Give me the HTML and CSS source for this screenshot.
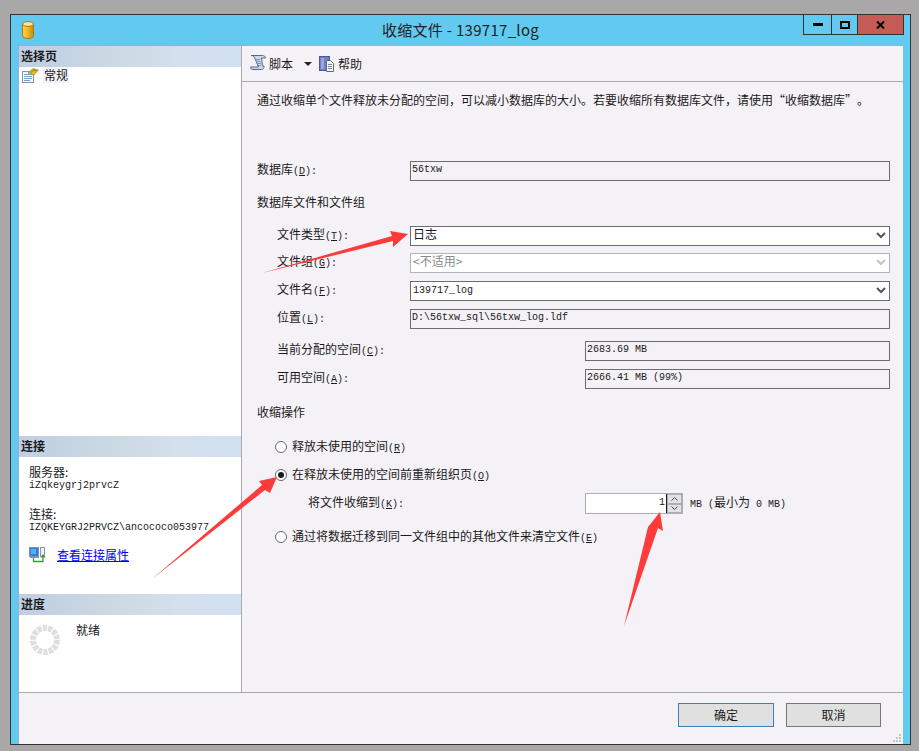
FILE: index.html
```html
<!DOCTYPE html>
<html lang="zh-CN">
<head>
<meta charset="utf-8">
<title>收缩文件 - 139717_log</title>
<link rel="stylesheet" href="styles.css">
</head>
<body>
<div class="window">
  <header class="titlebar">
    <div class="title-left">
      <svg width="14" height="18" viewBox="0 0 14 18"><defs><linearGradient id="cyl" x1="0" x2="1" y1="0" y2="0"><stop offset="0" stop-color="#f6d35e"/><stop offset=".45" stop-color="#f2b91f"/><stop offset="1" stop-color="#c98a0b"/></linearGradient></defs><path d="M1.500 3v12c0 1.400 2.500 2.500 5.500 2.500s5.500-1.100 5.500-2.500V3z" fill="url(#cyl)" stroke="#a87a18"/><ellipse cx="7" cy="3" rx="5.500" ry="2.300" fill="#fbe9a6" stroke="#a87a18"/></svg>
    </div>
    <div class="title-text">收缩文件 - 139717_log</div>
    <div class="title-right">
      <div class="wbtn wbtn-min"><svg width="10" height="3" viewBox="0 0 10 3"><rect width="10" height="3" fill="#000"/></svg></div>
      <div class="wbtn wbtn-max"><svg width="10" height="8" viewBox="0 0 10 8"><path d="M1 1h8v6H1z" fill="none" stroke="#000" stroke-width="2"/></svg></div>
      <div class="wbtn wbtn-close"><svg width="9" height="8" viewBox="0 0 9 8"><path d="M1 0.500L8 7.500M8 0.500L1 7.500" stroke="#000" stroke-width="2"/></svg></div>
    </div>
  </header>

  <div class="main">
    <div class="upper">
      <aside class="side">
        <div class="side-head">选择页</div>
        <div class="page-item">
          <svg width="17" height="15" viewBox="0 0 17 15"><rect x="0.500" y="3.500" width="11" height="11" fill="#f4f7fb" stroke="#8794a8"/><path d="M2 6.500h8M2 8.500h8M2 10.500h8M2 12.500h6" stroke="#7f9cc6"/><path d="M6 5L11 0.500L16.500 2L12 7z" fill="#e8bc2e" stroke="#8b7a22" stroke-width=".6"/><path d="M8.500 5l3-3 3 .7" stroke="#4f8a3a" fill="none"/></svg>
          <span class="page-name">常规</span>
        </div>
        <div class="side-fill"></div>
        <div class="side-head">连接</div>
        <div class="conn">
          <div class="conn-label">服务器:</div>
          <div class="mono conn-value">iZqkeygrj2prvcZ</div>
          <div class="conn-label conn-second">连接:</div>
          <div class="mono conn-value">IZQKEYGRJ2PRVCZ\ancococo053977</div>
          <div class="conn-link">
            <svg width="17" height="16" viewBox="0 0 17 16"><rect x="0.500" y="0.500" width="9" height="9" fill="#2f7fe0" stroke="#7f93ad"/><rect x="2" y="2" width="5" height="5" fill="#58b0f0"/><rect x="1" y="10" width="9" height="1" fill="#8c98a8"/><rect x="11.500" y="0.500" width="4" height="9" fill="#eef1f5" stroke="#8b95a5"/><path d="M4.500 11v3.500h9.500V9" fill="none" stroke="#3d9a26" stroke-width="1.300"/><path d="M11.500 10.500L14 7l2.500 3.500z" fill="#3d9a26"/></svg>
            <a href="#">查看连接属性</a>
          </div>
        </div>
        <div class="side-head">进度</div>
        <div class="progress">
          <svg width="32" height="32" viewBox="0 0 32 32"><circle cx="16" cy="16" r="12" fill="none" stroke="#dfdfdf" stroke-width="6" stroke-dasharray="4.300 1.090"/></svg>
          <span>就绪</span>
        </div>
      </aside>

      <section class="content">
        <div class="toolbar">
          <svg class="tool-icon" width="16" height="17" viewBox="0 0 16 17"><path d="M1 .500h11.500c1.500 0 3 1 3 2.500h-4l1 8h1.500c.5 2-1 3.500-2.500 3.500H3c-1.500 0-2.500-1-2.500-2.500h8L5 3.500C4.500 1.500 3 .5 1 .5z" fill="#ccd9ec" stroke="#55688f"/><path d="M5.500 4.500h4.500M6 6.500h4.500M6.500 8.500h4.500M7 10.500h4" stroke="#7c8fb3"/></svg>
          <span class="tool-text">脚本</span>
          <svg class="tool-caret" width="8" height="4" viewBox="0 0 8 4"><path d="M0 0h8L4 4z" fill="#222"/></svg>
          <svg class="tool-icon tool-help" width="16" height="16" viewBox="0 0 16 16"><rect x=".500" y=".500" width="10" height="14" fill="#6e7fc4" stroke="#4a5a96"/><rect x="2" y="2" width="3" height="11" fill="#98a6dc"/><path d="M7.500 4.500h4l3 3v8h-7z" fill="#f5f7fb" stroke="#5b6a80"/><path d="M9 8.500h4M9 10.500h4M9 12.500h4" stroke="#7a8aa0"/></svg>
          <span class="tool-text">帮助</span>
        </div>

        <div class="form">
          <p class="desc">通过收缩单个文件释放未分配的空间&#xFF0C;可以减小数据库的大小。若要收缩所有数据库文件&#xFF0C;请使用<span class="quote-open">&#x201C;</span>收缩数据库<span class="quote-close">&#x201D;</span>。</p>

          <div class="row gap-db">
            <label>数据库<span class="mono">(<u>D</u>):</span></label>
            <div class="box mono">56txw</div>
          </div>

          <h2 class="group gap-13">数据库文件和文件组</h2>

          <div class="row sub gap-12">
            <label>文件类型<span class="mono">(<u>T</u>):</span></label>
            <div class="combo"><span class="combo-cjk">日志</span><svg width="10" height="7" viewBox="0 0 10 7"><path d="M1 1l4 4 4-4" fill="none" stroke="#555" stroke-width="2"/></svg></div>
          </div>
          <div class="row sub gap-7">
            <label>文件组<span class="mono">(<u>G</u>):</span></label>
            <div class="combo combo-off"><span class="combo-cjk">&lt;不适用&gt;</span><svg width="10" height="7" viewBox="0 0 10 7"><path d="M1 1l4 4 4-4" fill="none" stroke="#c4c4c4" stroke-width="2"/></svg></div>
          </div>
          <div class="row sub gap-8">
            <label>文件名<span class="mono">(<u>F</u>):</span></label>
            <div class="combo"><span class="mono">139717_log</span><svg width="10" height="7" viewBox="0 0 10 7"><path d="M1 1l4 4 4-4" fill="none" stroke="#555" stroke-width="2"/></svg></div>
          </div>
          <div class="row sub gap-8">
            <label>位置<span class="mono">(<u>L</u>):</span></label>
            <div class="box mono">D:\56txw_sql\56txw_log.ldf</div>
          </div>

          <div class="row sub wide gap-12">
            <label>当前分配的空间<span class="mono">(<u>C</u>):</span></label>
            <div class="box mono">2683.69 MB</div>
          </div>
          <div class="row sub wide gap-8">
            <label>可用空间<span class="mono">(<u>A</u>):</span></label>
            <div class="box mono">2666.41 MB (99%)</div>
          </div>

          <h2 class="group gap-15">收缩操作</h2>

          <div class="radio gap-15"><i class="dot"></i><span>释放未使用的空间<span class="mono">(<u>R</u>)</span></span></div>
          <div class="radio gap-8"><i class="dot dot-on"></i><span>在释放未使用的空间前重新组织页<span class="mono">(<u>O</u>)</span></span></div>
          <div class="row shrink gap-7">
            <label>将文件收缩到<span class="mono">(<u>K</u>):</span></label>
            <div class="spin">
              <div class="spin-val mono">1</div>
              <div class="spin-btns">
                <div class="spin-btn"><svg width="7" height="4" viewBox="0 0 7 4"><path d="M.500 3.500l3-3 3 3" fill="none" stroke="#444"/></svg></div>
                <div class="spin-btn"><svg width="7" height="4" viewBox="0 0 7 4"><path d="M.500 .500l3 3 3-3" fill="none" stroke="#444"/></svg></div>
              </div>
            </div>
            <div class="unit"><span class="mono">MB (</span>最小为<span class="mono"> 0 MB)</span></div>
          </div>
          <div class="radio gap-15"><i class="dot"></i><span>通过将数据迁移到同一文件组中的其他文件来清空文件<span class="mono">(<u>E</u>)</span></span></div>
        </div>
      </section>
    </div>

    <footer class="footer">
      <button class="btn btn-default" type="button">确定</button>
      <button class="btn" type="button">取消</button>
      <svg class="grip" width="8" height="8" viewBox="0 0 8 8"><path d="M6 0h2v2H6zM3 3h2v2H3zM6 3h2v2H6zM0 6h2v2H0zM3 6h2v2H3zM6 6h2v2H6z" fill="#c4c4c4"/></svg>
    </footer>
  </div>
</div>

<svg class="arrows" width="919" height="751" viewBox="0 0 919 751">
  <polygon points="262,273 392,236 390,231 408,234 393,247 393,241"/>
  <polygon points="152,579 262,485 259,481 277,477 270,493 265,490"/>
  <polygon points="624,626 648,527 660,512 663,531 658,528"/>
</svg>
</body>
</html>
```

FILE: styles.css
```css
* { box-sizing: border-box; }

html, body {
  margin: 0;
  height: 100%;
}

body {
  position: relative;
  width: 919px;
  height: 751px;
  overflow: hidden;
  padding: 14px 0 0 10px;
  background: #a9a7a8;
  font: 12px/20px "Noto Sans CJK SC", "Liberation Sans", sans-serif;
  color: #1a1a1a;
}

.mono {
  font-family: "Liberation Mono", "Noto Sans CJK SC", monospace;
  font-size: 10px;
}

.window {
  display: flex;
  flex-direction: column;
  width: 901px;
  height: 731px;
  border: 1px solid #333;
  background: #62c9f0;
}

.titlebar {
  display: grid;
  grid-template-columns: 1fr auto 1fr;
  align-items: start;
  height: 30px;
  flex: none;
}

.title-left {
  padding: 6px 0 0 10px;
}

.title-left svg { display: block; }

.title-text {
  font-size: 15px;
  line-height: 30px;
  letter-spacing: .3px;
  color: #222;
}

.title-right {
  display: flex;
  justify-content: flex-end;
  padding-right: 6px;
}

.wbtn {
  display: flex;
  align-items: center;
  justify-content: center;
  height: 21px;
  margin-top: -1px;
  border: 1px solid #333;
  border-left-width: 0;
}

.wbtn-min { width: 29px; border-left-width: 1px; }
.wbtn-max { width: 26px; }
.wbtn-close { width: 46px; background: #c45b54; }

.main {
  flex: 1;
  display: flex;
  flex-direction: column;
  margin: 0 7px;
  min-height: 0;
  border-top: 1px solid #8fb4d0;
  border-left: 1px solid #8fb4d0;
  background: #f5f2f7;
}

.upper {
  flex: none;
  display: flex;
  height: 647px;
  border-bottom: 1px solid #a9a9a9;
}

.side {
  flex: none;
  display: flex;
  flex-direction: column;
  width: 223px;
  border-right: 1px solid #a9a9a9;
  background: #fff;
}

.side-head {
  flex: none;
  height: 21px;
  padding-left: 2px;
  background: linear-gradient(90deg, #bfcee2, #cddbe4 48%, #d5dfee 72%, #d0e1f3);
  font-weight: 700;
  line-height: 20px;
}

.page-item {
  display: flex;
  align-items: center;
  gap: 4px;
  height: 16px;
  padding-left: 3px;
}

.page-name {
  padding: 0 1px;
  background: #f5f2f7;
  line-height: 16px;
}

.side-fill { flex: 1; }

.conn {
  flex: none;
  height: 137px;
  padding: 8px 0 0 10px;
}

.conn-label { line-height: 14px; }
.conn-value { line-height: 10px; margin-top: 2px; }
.conn-second { margin-top: 16px; }

.conn-link {
  display: flex;
  align-items: center;
  gap: 11px;
  margin-top: 12px;
}

.conn-link a { color: #0000ee; }

.progress {
  flex: none;
  display: flex;
  align-items: flex-start;
  gap: 15px;
  height: 77px;
  padding: 9px 0 0 10px;
}

.progress span { margin-top: -4px; }

.content {
  flex: 1;
  min-width: 0;
}

.toolbar {
  display: flex;
  align-items: center;
  height: 36px;
  padding-left: 8px;
  border-bottom: 1px solid #a9a9a9;
}

.tool-icon { flex: none; }
.tool-text { margin-left: 3px; }
.tool-caret { margin-left: 11px; }
.tool-help { margin-left: 7px; }

.form {
  padding: 8px 13px 0 15px;
}

.desc {
  margin: 0;
  white-space: nowrap;
}

.quote-open, .quote-close {
  display: inline-block;
  width: 12px;
}

.quote-open { text-align: right; }
.quote-close { text-align: left; }

.row {
  display: grid;
  grid-template-columns: 153px 1fr;
  align-items: center;
  height: 20px;
}

.row.sub label { padding-left: 20px; }
.row.wide { grid-template-columns: 328px 1fr; }

.row.shrink {
  grid-template-columns: 328px 98px 1fr;
}

.row.shrink label { padding-left: 51px; }

.box, .combo {
  display: flex;
  align-items: center;
  height: 20px;
  padding-left: 1px;
  border: 1px solid #6d6d6d;
}

.box { padding-bottom: 2px; }

.combo {
  justify-content: space-between;
  padding: 0 3px 0 2px;
  background: #fff;
}

.combo-cjk { margin-top: -3px; }

.combo-off {
  border-color: #b1b5b8;
  color: #8a8a8a;
}

.group {
  height: 20px;
  margin: 0;
  font: inherit;
}

.radio {
  display: flex;
  align-items: center;
  gap: 5px;
  height: 20px;
  padding-left: 18px;
}

.dot {
  position: relative;
  flex: none;
  width: 12px;
  height: 12px;
  border: 1px solid #666;
  border-radius: 50%;
  background: #fff;
}

.dot-on::after {
  content: "";
  position: absolute;
  inset: 2px;
  border-radius: 50%;
  background: #1a1a1a;
}

.spin {
  display: flex;
  height: 21px;
  border: 1px solid #adadb8;
  background: #fff;
}

.spin-val {
  flex: 1;
  padding-right: 1px;
  text-align: right;
  line-height: 18px;
}

.spin-btns {
  display: flex;
  flex-direction: column;
  width: 16px;
  border-left: 1px solid #1a1a1a;
}

.spin-btn {
  flex: 1;
  display: flex;
  align-items: center;
  justify-content: center;
  background: #e2e2e4;
  border: 1px solid #adadb8;
}

.unit { padding-left: 7px; white-space: nowrap; }

.gap-db { margin-top: 49px; }
.gap-7 { margin-top: 7px; }
.gap-8 { margin-top: 8px; }
.gap-12 { margin-top: 12px; }
.gap-13 { margin-top: 13px; }
.gap-15 { margin-top: 15px; }

.footer {
  position: relative;
  flex: 1;
  display: flex;
  justify-content: flex-end;
  gap: 12px;
  padding: 10px 22px 0 0;
}

.btn {
  width: 96px;
  height: 24px;
  padding: 0;
  border: 1px solid #777;
  background: #e0e0e0;
  font: inherit;
  color: #1a1a1a;
}

.btn + .btn { width: 95px; }

.btn-default { border-color: #3a7fb8; }

.grip {
  position: absolute;
  right: 2px;
  bottom: 2px;
}

.arrows {
  position: absolute;
  top: 0;
  left: 0;
  pointer-events: none;
}

.arrows polygon { fill: #fe3b3b; }
```
